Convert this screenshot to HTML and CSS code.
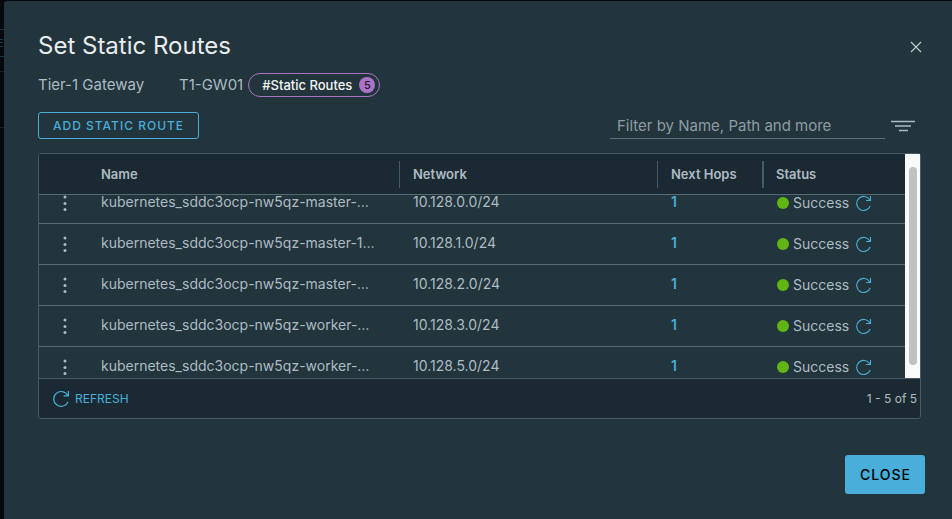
FILE: index.html
```html
<!DOCTYPE html>
<html lang="en">
<head>
<meta charset="utf-8">
<title>Set Static Routes</title>
<link rel="stylesheet" href="styles.css">
</head>
<body>
<svg class="sprite" aria-hidden="true">
  <symbol id="refresh" viewBox="0 0 16 16"><path d="M13.800 5A7 7 0 1 0 14.200 11M14.500 1v4.500h-4.500" fill="none" stroke="currentColor" stroke-width="1.100"/></symbol>
  <symbol id="dots" viewBox="0 0 4 16"><g fill="currentColor"><circle cx="2" cy="2" r="1.500"/><circle cx="2" cy="8.500" r="1.500"/><circle cx="2" cy="14.500" r="1.500"/></g></symbol>
</svg>
<aside class="backdrop" aria-hidden="true"><div class="behind-button">E</div><div class="behind-line"></div><div class="behind-panel"></div></aside>
<main class="modal" role="dialog" aria-labelledby="title">
  <header class="modal-header">
    <h1 id="title">Set Static Routes</h1>
    <button class="dismiss" aria-label="Close dialog"><svg width="12" height="12" viewBox="0 0 12 12"><path d="M1 1l10 10M11 1L1 11" stroke="currentColor" stroke-width="1.1"/></svg></button>
  </header>
  <div class="context">
    <span class="kind">Tier-1 Gateway</span>
    <span class="gateway">T1-GW01</span>
    <span class="tag">#Static Routes <span class="count">5</span></span>
  </div>
  <div class="toolbar">
    <button class="add">ADD STATIC ROUTE</button>
    <div class="filter">
      <input type="text" aria-label="Filter routes" placeholder="Filter by Name, Path and more">
      <button class="filter-menu" aria-label="Filter options"><svg width="24" height="12" viewBox="0 0 24 12"><path d="M0 1.500h24M8 10.500h9" stroke="currentColor" stroke-width="1.300"/><path d="M4 6h16" stroke="currentColor" stroke-width="2" opacity=".75"/></svg></button>
    </div>
  </div>
  <section class="grid">
    <div class="grid-view">
      <div class="scroller" id="scroller">
        <table>
          <colgroup><col class="c-menu"><col><col class="c-network"><col class="c-hops"><col class="c-status"></colgroup>
          <thead><tr><th></th><th>Name</th><th class="split">Network</th><th class="split">Next Hops</th><th class="split wide">Status</th></tr></thead>
          <tbody>
            <tr><td><button class="icon" aria-label="Actions"><svg width="4" height="16"><use href="#dots"/></svg></button></td><td>kubernetes_sddc3ocp-nw5qz-master-…</td><td>10.128.0.0/24</td><td><a href="#">1</a></td><td><div class="status"><i class="dot"></i>Success<button class="icon blue" aria-label="Refresh status"><svg width="16" height="16"><use href="#refresh"/></svg></button></div></td></tr>
            <tr><td><button class="icon" aria-label="Actions"><svg width="4" height="16"><use href="#dots"/></svg></button></td><td>kubernetes_sddc3ocp-nw5qz-master-1…</td><td>10.128.1.0/24</td><td><a href="#">1</a></td><td><div class="status"><i class="dot"></i>Success<button class="icon blue" aria-label="Refresh status"><svg width="16" height="16"><use href="#refresh"/></svg></button></div></td></tr>
            <tr><td><button class="icon" aria-label="Actions"><svg width="4" height="16"><use href="#dots"/></svg></button></td><td>kubernetes_sddc3ocp-nw5qz-master-…</td><td>10.128.2.0/24</td><td><a href="#">1</a></td><td><div class="status"><i class="dot"></i>Success<button class="icon blue" aria-label="Refresh status"><svg width="16" height="16"><use href="#refresh"/></svg></button></div></td></tr>
            <tr><td><button class="icon" aria-label="Actions"><svg width="4" height="16"><use href="#dots"/></svg></button></td><td>kubernetes_sddc3ocp-nw5qz-worker-…</td><td>10.128.3.0/24</td><td><a href="#">1</a></td><td><div class="status"><i class="dot"></i>Success<button class="icon blue" aria-label="Refresh status"><svg width="16" height="16"><use href="#refresh"/></svg></button></div></td></tr>
            <tr><td><button class="icon" aria-label="Actions"><svg width="4" height="16"><use href="#dots"/></svg></button></td><td>kubernetes_sddc3ocp-nw5qz-worker-…</td><td>10.128.5.0/24</td><td><a href="#">1</a></td><td><div class="status"><i class="dot"></i>Success<button class="icon blue" aria-label="Refresh status"><svg width="16" height="16"><use href="#refresh"/></svg></button></div></td></tr>
          </tbody>
        </table>
      </div>
      <div class="scrollbar"><div class="thumb"></div></div>
    </div>
    <footer class="grid-footer">
      <button class="refresh"><svg width="17" height="17"><use href="#refresh"/></svg>REFRESH</button>
      <span>1 - 5 of 5</span>
    </footer>
  </section>
  <div class="actions"><button class="close">CLOSE</button></div>
</main>
<script src="app.js"></script>
</body>
</html>
```
FILE: styles.css
```css
* { box-sizing: border-box; }
body {
  margin: 0;
  min-height: 100vh;
  display: flex;
  background: #05090c;
  color: #adbbc4;
  font: 14px/20px Inter, "Open Sans", sans-serif;
}
button { font: inherit; color: inherit; background: none; border: 0; padding: 0; cursor: pointer; }
svg { display: block; }
.sprite { position: absolute; width: 0; height: 0; }
.backdrop { width: 4px; flex: none; overflow: hidden; color: #163c50; }
.behind-button { margin-top: 29px; height: 28px; border: solid #143445; border-width: 1px 0; line-height: 26px; font-size: 11px; text-indent: -3px; }
.behind-line { height: 15px; border-bottom: 1px solid #1a1f22; }
.behind-panel { height: 56px; border-bottom: 1px solid #1a1f22; }
.modal {
  flex: 1;
  min-width: 0;
  margin-top: 1px;
  padding: 30px 27px 24px 34px;
  background: #22343c;
  border-radius: 3px 0 0 0;
}
.modal-header { display: flex; justify-content: space-between; align-items: center; padding-right: 3px; }
h1 { margin: 0; font-size: 24px; line-height: 30px; font-weight: 400; color: #e9ecef; }
.dismiss { color: #c3cdd3; padding-top: 2px; }
.context { display: flex; align-items: center; height: 24px; margin-top: 12px; font-size: 15px; }
.kind { width: 141px; }
.gateway { margin-right: 5px; }
.tag {
  display: flex;
  align-items: center;
  gap: 7px;
  height: 24px;
  padding: 0 4px 0 13px;
  border: 1px solid #ad73c8;
  border-radius: 12px;
  color: #f2f4f5;
  font-size: 13px;
  font-weight: 500;
}
.count { width: 16px; height: 16px; border-radius: 8px; background: #ad73c8; color: #22182a; line-height: 16px; text-align: center; font-size: 11px; }
.toolbar { display: flex; justify-content: space-between; align-items: flex-start; margin-top: 15px; padding-right: 10px; }
.add { height: 27px; padding: 0 14px; border: 1px solid #49aeda; border-radius: 3px; color: #49aeda; font-size: 12px; line-height: 25px; font-weight: 500; letter-spacing: 1px; }
.filter { display: flex; align-items: center; gap: 6px; }
.filter input {
  width: 275px;
  height: 27px;
  padding: 0 7px;
  border: 0;
  border-bottom: 1px solid #5b6e79;
  background: none;
  color: #adbbc4;
  font: inherit;
  font-size: 15px;
  outline: 0;
}
.filter input::placeholder { color: #8f9ca3; opacity: 1; }
.filter-menu { color: #adbbc4; }
.grid { margin: 14px 4px 0 0; border: 1px solid #495a65; border-radius: 3px; background: #1b2a32; }
.grid-view { display: flex; height: 224px; }
.scroller { flex: 1; min-width: 0; overflow: hidden; background: #22343c; }
table { width: 100%; table-layout: fixed; border-collapse: separate; border-spacing: 0; }
.c-menu { width: 48px; }
.c-network { width: 258px; }
.c-hops { width: 105px; }
.c-status { width: 143px; }
th, td { height: 41px; padding: 0 0 0 14px; border-bottom: 1px solid #566a75; text-align: left; white-space: nowrap; }
td { padding-bottom: 2px; }
th { position: sticky; top: 0; z-index: 1; background: #1b2a32; font-size: 13px; font-weight: 600; }
.split::before { content: ""; position: absolute; left: 0; top: 7px; bottom: 6px; border-left: 1px solid #495a65; }
.wide::before { border-left-width: 2px; }
td:first-child { padding-left: 24px; padding-bottom: 0; }
td:last-child { padding-bottom: 0; }
td a { color: #49aeda; font-weight: 600; text-decoration: none; }
.icon { display: block; }
.blue { color: #49aeda; margin-left: 7px; }
.status { display: flex; align-items: center; }
.dot { width: 12px; height: 12px; margin: 0 4px 0 1px; border-radius: 50%; background: #60b515; }
.scrollbar { width: 15px; padding: 13px 3px 13px 4px; background: #fafafa; }
.thumb { height: 100%; border-radius: 4px; background: #c1c1c1; }
.grid-footer { display: flex; align-items: center; justify-content: space-between; height: 40px; padding: 0 3px 0 14px; border-top: 1px solid #495a65; font-size: 12px; }
.refresh { display: flex; align-items: center; gap: 5px; color: #49aeda; }
.actions { display: flex; justify-content: flex-end; margin-top: 36px; }
.close { height: 39px; padding: 0 14px 0 15px; border-radius: 3px; background: #49aeda; color: #000; font-size: 14px; font-weight: 500; letter-spacing: 1px; }
```
FILE: app.js
```js
document.getElementById("scroller").scrollTop = 12;
```
